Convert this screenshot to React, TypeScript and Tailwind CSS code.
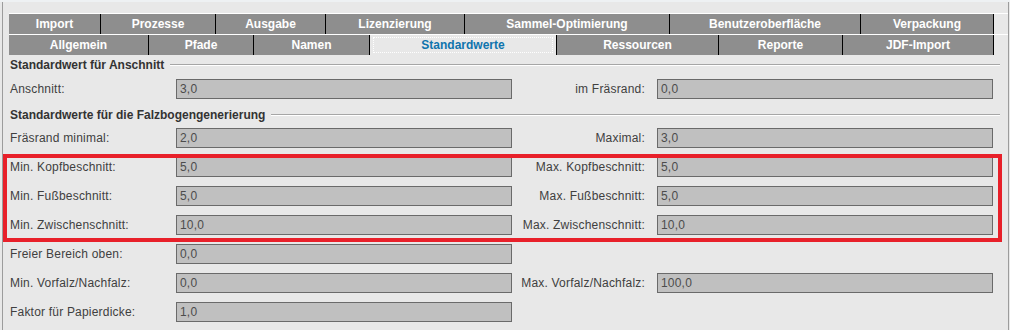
const row1 = [
  { label: 'Import', w: 'w-[92px]' },
  { label: 'Prozesse', w: 'w-[115px]' },
  { label: 'Ausgabe', w: 'w-[110px]' },
  { label: 'Lizenzierung', w: 'w-[139px]' },
  { label: 'Sammel-Optimierung', w: 'w-[205px]' },
  { label: 'Benutzeroberfläche', w: 'w-[191px]' },
  { label: 'Verpackung', w: 'w-[133px]' },
];

const row2 = [
  { label: 'Allgemein', w: 'w-[140px]' },
  { label: 'Pfade', w: 'w-[105px]' },
  { label: 'Namen', w: 'w-[116px]' },
  { label: 'Standardwerte', w: 'w-[187px]', active: true },
  { label: 'Ressourcen', w: 'w-[162px]' },
  { label: 'Reporte', w: 'w-[124px]' },
  { label: 'JDF-Import', w: 'w-[151px]' },
];

type Tab = { label: string; w: string; active?: boolean };

const TabRow = ({ tabs }: { tabs: Tab[] }) => (
  <div className="flex h-[21px] border-t border-white">
    {tabs.map((t) =>
      t.active ? (
        <div key={t.label} className={`${t.w} h-full bg-[#e8e8e8] border-r border-black px-[3px] py-[2px]`}>
          <div className="h-full border border-dotted border-white flex items-center justify-center text-[12px] font-bold text-[#0f74ad]">
            {t.label}
          </div>
        </div>
      ) : (
        <div
          key={t.label}
          className={`${t.w} h-full bg-[#8e8e8e] border-r border-black flex items-center justify-center text-[12px] font-bold text-white`}
        >
          {t.label}
        </div>
      )
    )}
  </div>
);

const SectionTitle = ({ title, className }: { title: string; className: string }) => (
  <div className={`flex items-center h-[16px] pl-[7px] pr-[8px] ${className}`}>
    <span className="text-[12px] font-bold text-[#333333] whitespace-nowrap">{title}</span>
    <div className="flex-1 ml-[6px] h-[2px] border-t border-[#a6a6a6] border-b border-b-white" />
  </div>
);

const Field = ({ value }: { value: string }) => (
  <div className="w-[336px] h-[20px] bg-[#c0c0c0] border border-[#6a6a6a] flex items-center pl-[3px] text-[12px] tracking-[0.2px] text-[#4c4c4c]">
    {value}
  </div>
);

type Row = { l: string; lv: string; r?: string; rv?: string };

const FormRow = ({ row, className }: { row: Row; className?: string }) => (
  <div className={`flex items-center h-[20px] pl-[7px] ${className ?? ''}`}>
    <div className="w-[166px] text-[12px] tracking-[0.2px] text-[#404040] whitespace-nowrap">{row.l}</div>
    <Field value={row.lv} />
    {row.r && (
      <>
        <div className="w-[133px] text-right text-[12px] tracking-[0.2px] text-[#404040] whitespace-nowrap">{row.r}</div>
        <div className="w-[12px]" />
        <Field value={row.rv ?? ''} />
      </>
    )}
  </div>
);

const rows: Row[] = [
  { l: 'Fräsrand minimal:', lv: '2,0', r: 'Maximal:', rv: '3,0' },
  { l: 'Min. Kopfbeschnitt:', lv: '5,0', r: 'Max. Kopfbeschnitt:', rv: '5,0' },
  { l: 'Min. Fußbeschnitt:', lv: '5,0', r: 'Max. Fußbeschnitt:', rv: '5,0' },
  { l: 'Min. Zwischenschnitt:', lv: '10,0', r: 'Max. Zwischenschnitt:', rv: '10,0' },
  { l: 'Freier Bereich oben:', lv: '0,0' },
  { l: 'Min. Vorfalz/Nachfalz:', lv: '0,0', r: 'Max. Vorfalz/Nachfalz:', rv: '100,0' },
  { l: 'Faktor für Papierdicke:', lv: '1,0' },
];

export default function App() {
  return (
    <div
      className="relative w-[1010px] h-[330px] overflow-hidden bg-[#e8e8e8]"
      style={{ fontFamily: '"Liberation Sans", Arial, sans-serif' }}
    >
      <div className="h-[2px] bg-[#eef1f3]" />
      <div className="ml-[2px] w-[1007px] h-[328px] border-l border-r border-[#9c9c9c]">
        <div className="pt-[11px] pl-[6px]">
          <TabRow tabs={row1} />
          <TabRow tabs={row2} />
        </div>
        <SectionTitle title="Standardwert für Anschnitt" className="mt-[2px]" />
        <FormRow row={{ l: 'Anschnitt:', lv: '3,0', r: 'im Fräsrand:', rv: '0,0' }} className="mt-[6px]" />
        <SectionTitle title="Standardwerte für die Falzbogengenerierung" className="mt-[8px]" />
        <div className="mt-[5px] flex flex-col gap-[9px]">
          {rows.map((r) => (
            <FormRow key={r.l} row={r} />
          ))}
        </div>
      </div>
      <div className="absolute left-[3px] top-[154px] w-[999px] h-[88px] border-4 border-[#e8202a]" />
    </div>
  );
}
